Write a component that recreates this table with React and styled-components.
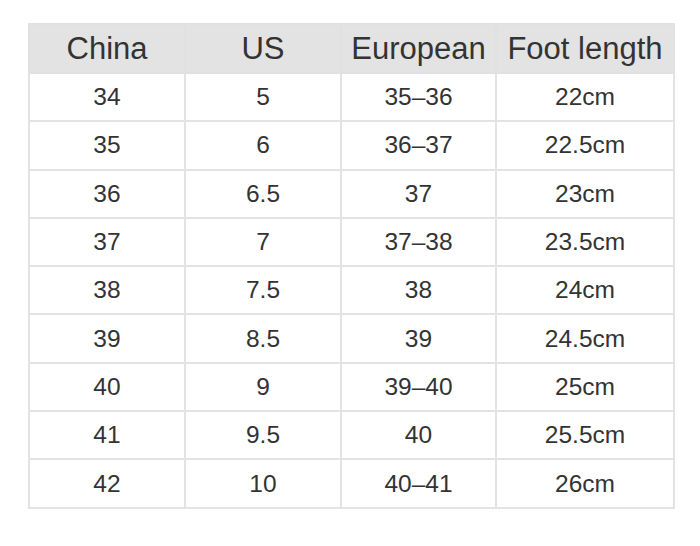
import React from "react";
import styled, { createGlobalStyle } from "styled-components";

const GlobalStyle = createGlobalStyle`
  html, body {
    margin: 0;
    padding: 0;
    background: #fff;
  }
  body {
    font-family: "Liberation Sans", Arial, sans-serif;
  }
`;

const Page = styled.div`
  width: 700px;
  height: 546px;
  box-sizing: border-box;
  padding: 23px 0 0 28px;
  background: #fff;
`;

const SizeTable = styled.table`
  border-collapse: collapse;
  table-layout: fixed;
  width: 645px;
  color: #333;
`;

const Col = styled.col`
  width: ${(p) => p.$w}px;
`;

const HeadCell = styled.th`
  height: 47px;
  padding: 0;
  background: #e3e3e3;
  border: 2px solid #e1e1e1;
  font-weight: 400;
  font-size: 31px;
  text-align: center;
  vertical-align: middle;
  white-space: nowrap;
`;

const Cell = styled.td`
  height: 46.3px;
  padding: 0;
  border: 2px solid #e3e3e3;
  font-size: 24.5px;
  text-align: center;
  vertical-align: middle;
  white-space: nowrap;
`;

const headers = ["China", "US", "European", "Foot length"];

const rows = [
  ["34", "5", "35–36", "22cm"],
  ["35", "6", "36–37", "22.5cm"],
  ["36", "6.5", "37", "23cm"],
  ["37", "7", "37–38", "23.5cm"],
  ["38", "7.5", "38", "24cm"],
  ["39", "8.5", "39", "24.5cm"],
  ["40", "9", "39–40", "25cm"],
  ["41", "9.5", "40", "25.5cm"],
  ["42", "10", "40–41", "26cm"],
];

export default function App() {
  return (
    <>
      <GlobalStyle />
      <Page>
        <SizeTable>
          <colgroup>
            <Col $w={156} />
            <Col $w={156} />
            <Col $w={155} />
            <Col $w={178} />
          </colgroup>
          <thead>
            <tr>
              {headers.map((h) => (
                <HeadCell key={h}>{h}</HeadCell>
              ))}
            </tr>
          </thead>
          <tbody>
            {rows.map((r) => (
              <tr key={r[0]}>
                {r.map((v, i) => (
                  <Cell key={i}>{v}</Cell>
                ))}
              </tr>
            ))}
          </tbody>
        </SizeTable>
      </Page>
    </>
  );
}
